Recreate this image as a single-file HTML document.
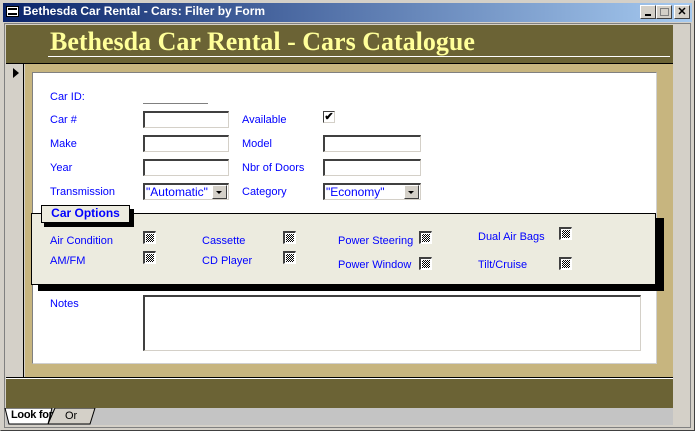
<!DOCTYPE html>
<html><head><style>
*{margin:0;padding:0;box-sizing:border-box}
body{width:695px;height:431px;overflow:hidden;background:#d4d0c8;position:relative;font-family:"Liberation Sans",sans-serif}
div,span{position:absolute}
.lbl{color:#0000ff;font-size:11px;line-height:14px;white-space:nowrap}
.tb{background:#fff;border-top:2px solid #404040;border-left:2px solid #404040;border-right:1px solid #d4d0c8;border-bottom:1px solid #d4d0c8;height:17px}
.cb{width:13px;height:13px;border-top:2px solid #404040;border-left:2px solid #404040;border-right:1px solid #fff;border-bottom:1px solid #fff;background:#fff}
.cb:after{content:"";position:absolute;left:1px;top:1px;width:8px;height:8px;background:repeating-conic-gradient(#000 0 25%,#fff 0 50%) 0 0/2px 2px}
.dd{right:1px;top:0px;width:15px;height:14px;background:#d4d0c8;border-top:1px solid #fff;border-left:1px solid #fff;border-right:1px solid #404040;border-bottom:1px solid #404040}
.dd:after{content:"";position:absolute;left:3px;top:5px;border-left:3px solid transparent;border-right:3px solid transparent;border-top:3px solid #000}
.btn{top:5px;width:16px;height:14px;background:#d4d0c8;border-top:1px solid #fff;border-left:1px solid #fff;border-right:1px solid #404040;border-bottom:1px solid #404040;font-size:11px;text-align:center;line-height:12px}
</style></head><body>
<div style="left:0;top:0;width:695px;height:431px;border:1px solid #d4d0c8;border-right-color:#404040;border-bottom-color:#404040"></div>
<div style="left:3px;top:3px;width:689px;height:19px;background:linear-gradient(90deg,#0a246a,#a6caf0)"></div>
<div style="left:6px;top:6px;width:13px;height:11px;background:#fff;border:1px solid #000"><div style="left:1px;top:1px;width:9px;height:7px;border-top:2px solid #000;border-bottom:2px solid #000"></div></div>
<div style="left:23px;top:4px;color:#fff;font-weight:bold;font-size:12px;line-height:15px">Bethesda Car Rental - Cars: Filter by Form</div>
<div class="btn" style="left:640px"><div style="left:4px;top:8px;width:6px;height:2px;background:#000"></div></div>
<div class="btn" style="left:656px"><div style="left:3px;top:2px;width:9px;height:8px;border:1px solid #808080"></div></div>
<div class="btn" style="left:674px;font-weight:bold">✕</div>
<div style="left:4px;top:23px;width:687px;height:405px;border:1px solid #808080;background:#d4d0c8"></div>
<div style="left:6px;top:25px;width:667px;height:38px;background:#6b6335"></div>
<div style="left:50px;top:27px;font-family:'Liberation Serif',serif;font-weight:bold;font-size:26px;color:#ffff99;white-space:nowrap;line-height:30px">Bethesda Car Rental - Cars Catalogue</div>
<div style="left:48px;top:56px;width:622px;height:1px;background:#fff"></div>
<div style="left:6px;top:63px;width:667px;height:1px;background:#000"></div>
<div style="left:6px;top:64px;width:18px;height:313px;background:#d4d0c8;border-right:1px solid #000"></div>
<div style="left:13px;top:68px;border-top:5px solid transparent;border-bottom:5px solid transparent;border-left:6px solid #000"></div>
<div style="left:25px;top:64px;width:648px;height:313px;background:#c7b57f"></div>
<div style="left:32px;top:72px;width:625px;height:292px;background:#fff;border:1px solid #d0d0d0;border-top-color:#808080;border-left-color:#808080"></div>
<div style="left:6px;top:377px;width:667px;height:1px;background:#000"></div>
<div style="left:6px;top:378px;width:667px;height:30px;background:#6b6335;border-top:1px solid #fff"></div>
<div style="left:6px;top:408px;width:667px;height:17px;background:#c4c4c4"></div>
<svg style="position:absolute;left:0;top:408px" width="130" height="18"><polygon points="55,0 95,0 90,16 48,16" fill="#d4d0c8" stroke="#000"/><polygon points="5,0 52,0 48,16 9,16" fill="#fff" stroke="#000"/></svg>
<div style="left:11px;top:409px;font-size:11px;font-weight:bold;color:#000;letter-spacing:-0.3px">Look for</div>
<div style="left:65px;top:410px;font-size:11px;color:#000">Or</div>

<div class="lbl" style="left:50px;top:90px">Car ID:</div>
<div style="left:143px;top:103px;width:65px;height:1px;background:#808080"></div>
<div class="lbl" style="left:50px;top:113px">Car #</div>
<div class="lbl" style="left:50px;top:137px">Make</div>
<div class="lbl" style="left:50px;top:161px">Year</div>
<div class="lbl" style="left:50px;top:185px">Transmission</div>
<div class="tb" style="left:143px;top:111px;width:86px"></div>
<div class="tb" style="left:143px;top:135px;width:86px"></div>
<div class="tb" style="left:143px;top:159px;width:86px"></div>
<div class="tb" style="left:143px;top:183px;width:86px"><span class="lbl" style="left:1px;top:0;font-size:12px">"Automatic"</span><div class="dd"></div></div>
<div class="lbl" style="left:242px;top:113px">Available</div>
<div class="lbl" style="left:242px;top:137px">Model</div>
<div class="lbl" style="left:242px;top:161px">Nbr of Doors</div>
<div class="lbl" style="left:242px;top:185px">Category</div>
<div style="left:323px;top:111px;width:12px;height:12px;border-top:1px solid #404040;border-left:1px solid #404040;border-right:1px solid #d4d0c8;border-bottom:1px solid #d4d0c8;background:#fff;font-size:11px;line-height:10px;font-weight:bold;text-align:center">✔</div>
<div class="tb" style="left:323px;top:135px;width:98px"></div>
<div class="tb" style="left:323px;top:159px;width:98px"></div>
<div class="tb" style="left:323px;top:183px;width:98px"><span class="lbl" style="left:1px;top:0;font-size:12px">"Economy"</span><div class="dd"></div></div>

<div style="left:38px;top:218px;width:626px;height:73px;background:#000"></div>
<div style="left:31px;top:213px;width:625px;height:72px;background:#ecebdf;border:1px solid #000"></div>
<div style="left:44px;top:209px;width:90px;height:18px;background:#000"></div>
<div style="left:41px;top:205px;width:89px;height:18px;background:#ecebdf;border:1px solid #000;color:#0000ff;font-weight:bold;font-size:12px;text-align:center;line-height:15px">Car Options</div>
<div class="lbl" style="left:50px;top:234px">Air Condition</div>
<div class="lbl" style="left:50px;top:254px">AM/FM</div>
<div class="lbl" style="left:202px;top:234px">Cassette</div>
<div class="lbl" style="left:202px;top:254px">CD Player</div>
<div class="lbl" style="left:338px;top:234px">Power Steering</div>
<div class="lbl" style="left:338px;top:258px">Power Window</div>
<div class="lbl" style="left:478px;top:230px">Dual Air Bags</div>
<div class="lbl" style="left:478px;top:258px">Tilt/Cruise</div>
<div class="cb" style="left:143px;top:231px"></div>
<div class="cb" style="left:143px;top:251px"></div>
<div class="cb" style="left:283px;top:231px"></div>
<div class="cb" style="left:283px;top:251px"></div>
<div class="cb" style="left:419px;top:231px"></div>
<div class="cb" style="left:419px;top:257px"></div>
<div class="cb" style="left:559px;top:227px"></div>
<div class="cb" style="left:559px;top:257px"></div>

<div class="lbl" style="left:50px;top:297px">Notes</div>
<div class="tb" style="left:143px;top:295px;width:498px;height:56px"></div>
</body></html>
